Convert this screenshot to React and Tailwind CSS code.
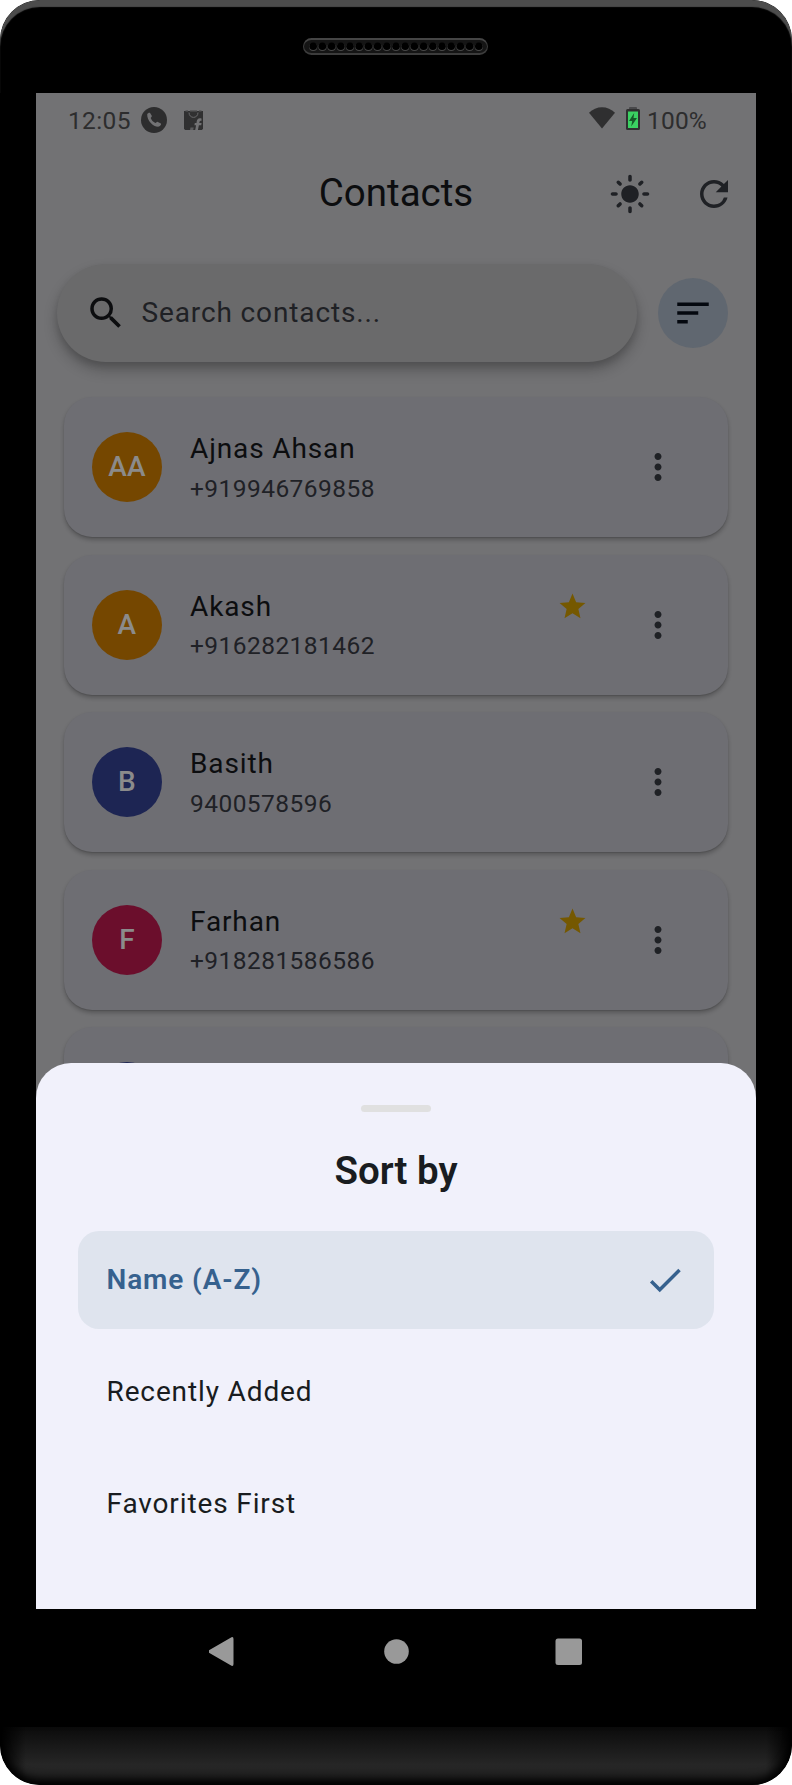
import { MdCheck, MdLightMode, MdMoreVert, MdRefresh, MdSearch, MdSort, MdStar } from "react-icons/md";

const contacts = [
  { initials: "AA", name: "Ajnas Ahsan", phone: "+919946769858", color: "bg-[#754700]" },
  { initials: "A", name: "Akash", phone: "+916282181462", color: "bg-[#754700]", favorite: true },
  { initials: "B", name: "Basith", phone: "9400578596", color: "bg-[#1d2553]" },
  { initials: "F", name: "Farhan", phone: "+918281586586", color: "bg-[#6b0e2c]", favorite: true },
  { initials: "", name: "", phone: "", color: "bg-[#1d2553]" },
];

const sortOptions = ["Name (A-Z)", "Recently Added", "Favorites First"];

function Speaker() {
  return (
    <div className="-ml-px flex h-[17px] w-[185px] items-center justify-center rounded-full border-x border-y-2 border-[#3c3c3c] border-t-[#454545] bg-[#151515]">
      <svg width="176" height="11" viewBox="0 0 176 11">
        {Array.from({ length: 19 }, (_, i) => (
          <g key={i}>
            <circle cx={5.2 + i * 9.2} cy="6" r="4.1" fill="#484848" />
            <circle cx={5.2 + i * 9.2} cy="5.2" r="3.8" fill="#000" />
          </g>
        ))}
      </svg>
    </div>
  );
}

function StatusBar() {
  return (
    <div className="flex h-[53px] shrink-0 items-center pl-[32px] pr-[49px] text-[24.5px] text-[#2d2d2e]">
      <span className="mr-px w-[72px] whitespace-nowrap pt-[3px] tracking-[0.35px]">12:05</span>
      <svg className="mt-px" width="26" height="26" viewBox="0 0 26 26">
        <circle cx="13" cy="13" r="13" fill="#2d2d2e" />
        <path
          d="M6.200 7.200c.9-1.200 2-1.900 2.900-1.100l1.700 2.600c.3.900-.8 1.500-1.100 2.300.8 2.200 2.400 3.900 4.700 5 .9-.2 1.600-1.500 2.500-1.100l3 1.700c.7.900-.4 2.300-1.800 3-5.200.9-12.300-5.800-11.900-12.400z"
          fill="#727274"
        />
      </svg>
      <svg className="ml-[17px]" width="19" height="20" viewBox="0 0 19 20">
        <path d="M0 1h19v17.500L18 20H1L0 18.500z" fill="#303031" />
        <path d="M1.500 0h2.500v1.500H1.500zM6 0h7v1.500H6zM15 0h2.500v1.500H15z" fill="#5a5a5c" />
        <path d="M5 2.500c0 6.500 9 6.500 9 0" fill="none" stroke="#68686a" strokeWidth="1" />
        <path d="M17.500 8.500c-3-.8-4.500.6-4.800 3l-.2 1.500h-1.700l-.4 2.200h1.700L11.200 20h2.700l1-4.800h2.300l.4-2.200h-2.300l.2-1.200c.2-.9.900-1.200 2-1z" fill="#727274" />
        <path d="M6.500 17.500h3.200L9.200 20H6z" fill="#5c5c5e" />
      </svg>
      <div className="ml-auto flex items-center">
        <svg className="-mt-1" width="26" height="22" viewBox="0 0 26 22">
          <path d="M0 5.800C7-1.700 19-1.700 26 5.800L13 21.500z" fill="#2f2f30" />
        </svg>
        <svg className="-mt-0.5 ml-[11px]" width="14" height="23" viewBox="0 0 14 23">
          <rect x="3" y="0" width="8" height="3" rx="1" fill="#49494b" />
          <rect x="0" y="2" width="14" height="21" rx="1.500" fill="#303031" />
          <rect x="2" y="4.500" width="10" height="16.500" fill="#3bd162" />
          <path d="M8.200 6L3 14h3.200l-1 5.500L11 11H7.500z" fill="#165a29" />
        </svg>
        <span className="ml-[7px] pt-[3px] tracking-[0.2px]">100%</span>
      </div>
    </div>
  );
}

function ContactCard({ contact }) {
  return (
    <div className="flex h-[140px] shrink-0 items-center rounded-[28px] bg-[#6e6e73] pl-7 pr-[49px] shadow-[0_3px_4px_rgba(0,0,0,0.24),0_1px_1px_rgba(0,0,0,0.1)]">
      <div className={`flex size-[70px] shrink-0 items-center justify-center rounded-full ${contact.color} text-[28px] font-medium tracking-[0.26px] text-[#8b8b8b]`}>
        {contact.initials}
      </div>
      <div className="ml-7 flex w-[399px] flex-col pt-[2px]">
        <div className="flex h-[42px] items-center justify-between">
          <span className="text-[28px] tracking-[0.875px] text-[#0c0d0f]">{contact.name}</span>
          {contact.favorite && <MdStar className="mr-px size-[31px] text-[#755800]" />}
        </div>
        <span className="flex h-[38px] items-center text-[24.5px] tracking-[0.44px] text-[#1f2126]">{contact.phone}</span>
      </div>
      <MdMoreVert className="ml-auto size-[42px] shrink-0 text-[#1f2125]" />
    </div>
  );
}

function SortSheet() {
  return (
    <div className="absolute inset-x-0 bottom-0 flex h-[546px] flex-col items-center rounded-t-[35px] bg-[#f1f1fb] px-[42px] pt-[42px]">
      <div className="h-[7px] w-[70px] shrink-0 rounded-full bg-[#e0e0e0]" />
      <h2 className="mt-[34px] text-[38.5px] font-semibold leading-[49px] text-[#191c20]">Sort by</h2>
      <ul className="mt-[36px] flex w-full flex-col gap-3.5">
        {sortOptions.map((option, i) =>
          i === 0 ? (
            <li key={option} className="flex h-[98px] items-center justify-between rounded-[21px] bg-[#dfe4ee] pl-[28.5px] pr-7 text-[28px] font-semibold tracking-[0.875px] text-[#36618e]">
              {option}
              <MdCheck className="size-[42px]" />
            </li>
          ) : (
            <li key={option} className="flex h-[98px] items-center rounded-[21px] pl-[28.5px] pr-7 text-[28px] tracking-[0.875px] text-[#191c20]">
              {option}
            </li>
          ),
        )}
      </ul>
    </div>
  );
}

export default function App() {
  return (
    <div className="h-[1785px] w-[792px] bg-white font-['Roboto',sans-serif]">
      <div className="flex h-full flex-col items-center overflow-hidden rounded-[40px] bg-black">
        <div className="flex h-[93px] w-full shrink-0 justify-center rounded-t-[40px] pt-[38px] shadow-[inset_0_7px_1px_#4c4c4c]">
          <Speaker />
        </div>

        <div className="relative flex h-[1516px] w-[720px] shrink-0 flex-col overflow-hidden bg-[#727274]">
          <StatusBar />
          <header className="grid h-24 shrink-0 grid-cols-3 items-center pr-[21px]">
            <h1 className="col-start-2 ml-[21px] pb-0.5 text-center text-[38.5px] text-[#0c0d0f]">Contacts</h1>
            <div className="flex justify-end gap-[42px] text-[#1f2125]">
              <MdLightMode className="size-[42px]" />
              <MdRefresh className="size-[42px]" />
            </div>
          </header>

          <div className="mt-[22px] flex shrink-0 items-center justify-between pl-[21px] pr-7">
            <div className="flex h-[98px] w-[580px] items-center gap-[14.5px] rounded-full bg-[#6a6a6b] pl-7 shadow-[0_8px_14px_rgba(0,0,0,0.24),0_4px_6px_rgba(0,0,0,0.1)]">
              <MdSearch className="size-[42px] text-[#0c0d0f]" />
              <span className="text-[28px] tracking-[0.875px] text-[#1f2125]">Search contacts...</span>
            </div>
            <button className="flex size-[70px] items-center justify-center rounded-full bg-[#606770] text-[#04080f]">
              <MdSort className="size-[42px]" />
            </button>
          </div>

          <main className="mt-[35px] flex flex-col gap-[17.5px] px-7">
            {contacts.map((contact, i) => (
              <ContactCard key={i} contact={contact} />
            ))}
          </main>

          <SortSheet />
        </div>

        <nav className="flex h-[118px] w-full shrink-0 justify-center pt-[28px]">
          <svg width="374" height="29" viewBox="0 0 374 29" fill="#999">
            <path d="M0 13.200L22.500.2Q24.500-.5 24.500 2v25q0 2.500-2 1.800L0 15.800q-1.200-1.300 0-2.600z" />
            <circle cx="187.500" cy="14.500" r="12.300" />
            <rect x="346.500" y="1.500" width="26.500" height="26.500" rx="2.500" />
          </svg>
        </nav>
        <div className="h-[58px] w-full shrink-0 rounded-b-[40px] bg-[linear-gradient(90deg,#000,transparent_26px,transparent_766px,#000),linear-gradient(180deg,#0b0b0b,#262626_65%,#202020)] shadow-[inset_0_-6px_9px_#000]" />
      </div>
    </div>
  );
}
